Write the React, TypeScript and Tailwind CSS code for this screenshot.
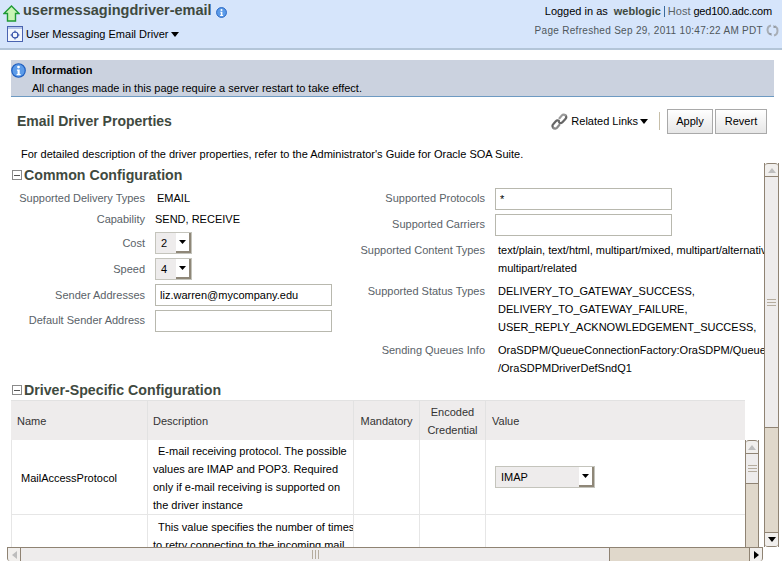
import type { ReactNode } from 'react';

const FONT = "font-['Liberation_Sans',Arial,sans-serif]";

function Caret(): JSX.Element {
    return (
        <svg width="8" height="5" viewBox="0 0 8 5" className="shrink-0">
            <path d="M0 0h8L4 5z" fill="#000" />
        </svg>
    );
}

function UpArrowIcon(): JSX.Element {
    return (
        <svg width="17" height="17" viewBox="0 0 17 17" className="shrink-0 mt-[4px]">
            <path d="M8.500 1 16 8.500h-3.500V16h-8V8.500H1z" fill="#c9f5b4" stroke="#1f9a35" strokeWidth="1.400" />
        </svg>
    );
}

function InfoIcon(props: { size: number }): JSX.Element {
    return (
        <svg width={props.size} height={props.size} viewBox="0 0 16 16" className="shrink-0">
            <circle cx="8" cy="8" r="7.200" fill="#5c9be8" stroke="#1f5fc0" strokeWidth="1.300" />
            <circle cx="8" cy="4.300" r="1.500" fill="#fff" />
            <path d="M6.300 6.800h3v4.800h1v1.400H6v-1.400h1V8.200h-.7z" fill="#fff" />
        </svg>
    );
}

function TargetIcon(): JSX.Element {
    return (
        <svg width="16" height="16" viewBox="0 0 16 16" className="shrink-0 mb-[1px]">
            <rect x="0.500" y="0.500" width="15" height="15" fill="#f2f6fd" stroke="#4a63b0" />
            <path d="M1 1h14v2H1z" fill="#b5c6ea" />
            <circle cx="8" cy="9" r="3" fill="none" stroke="#3550a8" strokeWidth="1.200" />
            <path d="M8 4.500v2.500M8 11v2.500M3.500 9H6M10 9h2.500" stroke="#3550a8" />
        </svg>
    );
}

function RefreshIcon(): JSX.Element {
    return (
        <svg width="13" height="13" viewBox="0 0 13 13" className="shrink-0">
            <path d="M5 1.500C2.500 2 1.500 4 1.500 6c0 2 1 3.500 2.500 4.500M8 11.500c2.500-.5 3.500-2.500 3.500-5 0-2-1-3.500-2.500-4.500" fill="none" stroke="#a8aeb6" strokeWidth="2" />
            <path d="M2.500 9.500 5.500 9v3zM10.500 3.500 7.500 4V1z" fill="#8d949c" />
        </svg>
    );
}

function LinkIcon(): JSX.Element {
    return (
        <svg width="17" height="17" viewBox="0 0 17 17" className="shrink-0">
            <g fill="none" strokeLinecap="round">
                <path d="M2.500 15c-1.500-1-1.300-2.800-.3-3.800l2.600-3c1-1 2.400-1 3.200-.2" stroke="#666" strokeWidth="2.200" />
                <path d="M2.500 15c1 1 2.600.7 3.500-.3l2.300-2.700" stroke="#8a8a8a" strokeWidth="2.200" />
                <path d="M8.200 9.500c1 1 2.300.8 3.200-.2l3-3.400c1-1 .9-2.600 0-3.600" stroke="#666" strokeWidth="2.200" />
                <path d="M14.400 2.300c-1-1-2.600-.9-3.500.1L8.500 5.200" stroke="#9a9a9a" strokeWidth="2.200" />
            </g>
        </svg>
    );
}

function MinusBox(): JSX.Element {
    return (
        <div className="w-[10px] h-[10px] border border-[#8a8a8a] flex items-center justify-center shrink-0 mr-[1px]">
            <div className="w-[6px] h-px bg-[#555]" />
        </div>
    );
}

function SectionTitle(props: { title: string }): JSX.Element {
    return (
        <div className="flex items-center gap-[1px] h-[20px] pl-[12px]">
            <MinusBox />
            <h2 className="text-[14.200px] font-bold text-[#3f4a3f] leading-none">{props.title}</h2>
        </div>
    );
}

function FormRow(props: { label: string; height: string; labelClass?: string; children: ReactNode }): JSX.Element {
    return (
        <div className={`flex items-center ${props.height}`}>
            <div className={`w-[145px] text-right text-[#5a6268] shrink-0 ${props.labelClass ?? ''}`}>{props.label}</div>
            <div className="ml-[10px] text-black whitespace-nowrap">{props.children}</div>
        </div>
    );
}

function TextRow(props: { label: string; top: string; height: string; children: ReactNode }): JSX.Element {
    return (
        <div className={`flex items-start box-content leading-[18px] ${props.top} ${props.height}`}>
            <div className="w-[145px] text-right text-[#5a6268] shrink-0">{props.label}</div>
            <div className="ml-[13px] whitespace-nowrap">{props.children}</div>
        </div>
    );
}

function TextBox(props: { value?: string }): JSX.Element {
    return (
        <div className="w-[177px] h-[22px] border border-[#b8b8ae] bg-white flex items-center pl-[4px] text-black">
            {props.value}
        </div>
    );
}

function Select(props: { value: string; width: string; pad: string }): JSX.Element {
    return (
        <div className={`${props.width} ${props.pad} h-[22px] border border-[#c4c4bc] bg-[#eeecec] flex items-center justify-between`}>
            <span className="pt-[1px]">{props.value}</span>
            <div className="w-[15px] h-[20px] bg-white border-r-2 border-b-2 border-[#8f8778] flex items-center justify-center">
                <svg width="7" height="4" viewBox="0 0 7 4">
                    <path d="M0 0h7L3.500 4z" fill="#000" />
                </svg>
            </div>
        </div>
    );
}

function ScrollBtn(props: { dir: 'up' | 'down' | 'left' | 'right'; className: string; muted?: boolean }): JSX.Element {
    const paths = {
        up: 'M0 5 4 0l4 5z',
        down: 'M0 0h8L4 5z',
        left: 'M5 0v8L0 4z',
        right: 'M0 0v8l5-4z',
    };
    const vertical = props.dir === 'up' || props.dir === 'down';
    return (
        <div className={`flex items-center justify-center shrink-0 bg-[#f1efed] border-[#8f8373] ${props.className}`}>
            <svg width={vertical ? 8 : 5} height={vertical ? 5 : 8} viewBox={vertical ? '0 0 8 5' : '0 0 5 8'}>
                <path d={paths[props.dir]} fill={props.muted ? '#bdbdbd' : '#000'} />
            </svg>
        </div>
    );
}

function Grip(props: { vertical: boolean }): JSX.Element {
    return (
        <div className={`flex ${props.vertical ? 'flex-col gap-[2px]' : 'flex-row gap-[2px]'}`}>
            {[0, 1, 2].map((i) => (
                <div key={i} className={props.vertical ? 'w-[9px] h-px bg-[#b5ac9e]' : 'w-px h-[9px] bg-[#b5ac9e]'} />
            ))}
        </div>
    );
}

const HEADER_CELL = 'border-r border-[#e2e2e2] flex items-center shrink-0';
const BODY_CELL = 'border-r border-b border-[#e6e6e6] shrink-0';

export default function App(): JSX.Element {
    return (
        <div className={`${FONT} w-[782px] h-[561px] overflow-hidden bg-white text-[11px] text-black flex flex-col`}>
            <header className="h-[50px] shrink-0 bg-[#d6e5fb] border-b-2 border-[#b3c5d8] flex justify-between">
                <div className="pl-[3px] pt-[1px]">
                    <div className="flex items-center h-[20px]">
                        <UpArrowIcon />
                        <span className="ml-[3px] text-[14.500px] font-bold text-[#3f4a3f]">usermessagingdriver-email</span>
                        <span className="ml-[4px] mt-[3px]"><InfoIcon size={11} /></span>
                    </div>
                    <div className="flex items-center h-[18px] mt-[4px] pl-[4px]">
                        <TargetIcon />
                        <span className="ml-[3px]">User Messaging Email Driver</span>
                        <span className="ml-[3px]"><Caret /></span>
                    </div>
                </div>
                <div className="pr-[3px] pt-[4px] flex flex-col items-end">
                    <div className="flex items-center h-[14px] pr-[7px]">
                        <span>Logged in as</span>
                        <span className="ml-[6px] font-bold text-[#3f4a3f]">weblogic</span>
                        <span className="ml-[3px] w-px h-[11px] bg-[#3b6b9c]" />
                        <span className="ml-[3px] text-[#5a6268]">Host</span>
                        <span className="ml-[3px] tracking-[-0.2px]">ged100.adc.com</span>
                    </div>
                    <div className="flex items-center h-[14px] mt-[5px] text-[10px] text-[#4f575c] tracking-[0.3px]">
                        <span>Page Refreshed Sep 29, 2011 10:47:22 AM PDT</span>
                        <span className="ml-[3px]"><RefreshIcon /></span>
                    </div>
                </div>
            </header>

            <div className="mt-[10px] mx-[11px] w-[763px] h-[37px] shrink-0 bg-[#cbd2df] border-b border-[#6d9ac2] pt-[2px]">
                <div className="flex items-center h-[17px]">
                    <InfoIcon size={15} />
                    <span className="ml-[6px] font-bold">Information</span>
                </div>
                <div className="pl-[21px] leading-[18px]">All changes made in this page require a server restart to take effect.</div>
            </div>

            <div className="h-[48px] shrink-0 flex items-center justify-between pl-[17px] pr-[15px]">
                <h1 className="text-[14px] font-bold text-[#3f4a3f] pt-[1px]">Email Driver Properties</h1>
                <div className="flex items-center">
                    <LinkIcon />
                    <span className="ml-[3px]">Related Links</span>
                    <span className="ml-[2px]"><Caret /></span>
                    <div className="ml-[11px] w-px h-[18px] bg-[#c7bfa9]" />
                    <button className="ml-[7px] w-[46px] h-[25px] border border-[#a9a9a9] bg-gradient-to-b from-white to-[#e6e6e6] text-black">Apply</button>
                    <button className="ml-[2px] w-[52px] h-[25px] border border-[#a9a9a9] bg-gradient-to-b from-white to-[#e6e6e6] text-black">Revert</button>
                </div>
            </div>

            <p className="pl-[21px] h-[18px] pt-[1px] shrink-0 leading-[16px]">
                For detailed description of the driver properties, refer to the Administrator's Guide for Oracle SOA Suite.
            </p>

            <div className="flex h-[384px] shrink-0">
                <div className="w-[764px] shrink-0 overflow-hidden">
                    <div className="h-[2px]" />
                    <SectionTitle title="Common Configuration" />
                    <div className="flex h-[195px]">
                        <div className="w-[340px] shrink-0 flex flex-col pt-[3px]">
                            <FormRow label="Supported Delivery Types" height="h-[20px]"><span className="pl-[2px]">EMAIL</span></FormRow>
                            <FormRow label="Capability" height="h-[22px]">SEND, RECEIVE</FormRow>
                            <FormRow label="Cost" height="h-[26px]"><Select value="2" width="w-[37px]" pad="pl-[5px]" /></FormRow>
                            <FormRow label="Speed" height="h-[26px]"><Select value="4" width="w-[37px]" pad="pl-[5px]" /></FormRow>
                            <FormRow label="Sender Addresses" height="h-[26px]"><TextBox value="liz.warren@mycompany.edu" /></FormRow>
                            <FormRow label="Default Sender Address" height="h-[26px]" labelClass="pb-[2px]"><TextBox /></FormRow>
                        </div>
                        <div className="flex-1 min-w-0 flex flex-col pt-[1px]">
                            <FormRow label="Supported Protocols" height="h-[26px]" labelClass="pb-[2px]"><TextBox value="*" /></FormRow>
                            <FormRow label="Supported Carriers" height="h-[26px]" labelClass="pb-[2px]"><TextBox /></FormRow>
                            <TextRow label="Supported Content Types" top="pt-[3px]" height="h-[36px]">text/plain, text/html, multipart/mixed, multipart/alternative,<br />multipart/related</TextRow>
                            <TextRow label="Supported Status Types" top="pt-[5px]" height="h-[54px]">DELIVERY_TO_GATEWAY_SUCCESS,<br />DELIVERY_TO_GATEWAY_FAILURE,<br />USER_REPLY_ACKNOWLEDGEMENT_SUCCESS,</TextRow>
                            <TextRow label="Sending Queues Info" top="pt-[5px]" height="h-[36px]">OraSDPM/QueueConnectionFactory:OraSDPM/Queues<br />/OraSDPMDriverDefSndQ1</TextRow>
                        </div>
                    </div>
                    <SectionTitle title="Driver-Specific Configuration" />
                    <div className="ml-[11px] flex">
                        <div className="w-[734px] shrink-0">
                            <div className="flex h-[40px] bg-[#eeecec] border-t border-[#e2e2e2] text-[#333]">
                                <div className={`${HEADER_CELL} w-[137px] pl-[6px] pt-[2px]`}>Name</div>
                                <div className={`${HEADER_CELL} w-[206px] pl-[5px] pt-[2px]`}>Description</div>
                                <div className={`${HEADER_CELL} w-[66px] justify-center pt-[2px]`}>Mandatory</div>
                                <div className={`${HEADER_CELL} w-[66px] justify-center text-center leading-[18px]`}>Encoded<br />Credential</div>
                                <div className="flex items-center pl-[6px] pt-[2px]">Value</div>
                            </div>
                            <div className="flex h-[75px]">
                                <div className={`${BODY_CELL} w-[137px] pl-[9px] pt-[2px] flex items-center border-l`}>MailAccessProtocol</div>
                                <div className={`${BODY_CELL} w-[206px] pl-[5px] leading-[18px] pt-[2px] whitespace-nowrap overflow-hidden`}>
                                    <span className="pl-[5px]">E-mail receiving protocol. The possible</span><br />values are IMAP and POP3. Required<br />only if e-mail receiving is supported on<br />the driver instance
                                </div>
                                <div className={`${BODY_CELL} w-[66px]`} />
                                <div className={`${BODY_CELL} w-[66px]`} />
                                <div className="flex-1 border-b border-[#e6e6e6] flex items-center pl-[9px]">
                                    <Select value="IMAP" width="w-[100px]" pad="pl-[5px]" />
                                </div>
                            </div>
                            <div className="flex h-[33px]">
                                <div className={`${BODY_CELL} w-[137px] border-l`} />
                                <div className={`${BODY_CELL} w-[206px] pl-[5px] leading-[18px] pt-[3px] whitespace-nowrap overflow-hidden`}>
                                    <span className="pl-[5px]">This value specifies the number of times</span><br />to retry connecting to the incoming mail
                                </div>
                                <div className={`${BODY_CELL} w-[66px]`} />
                                <div className={`${BODY_CELL} w-[66px]`} />
                            </div>
                        </div>
                        <div className="w-[14px] shrink-0 pt-[40px] h-[147px]">
                            <div className="h-full flex flex-col border-x border-[#8f8373]">
                                <ScrollBtn dir="up" muted className="h-[14px] border-t border-b rounded-t-[3px]" />
                                <div className="h-[30px] shrink-0 bg-[#eeecec] border-b border-[#8f8373] flex items-center justify-center">
                                    <Grip vertical />
                                </div>
                                <div className="flex-1 bg-[#e0d8cb]" />
                            </div>
                        </div>
                    </div>
                </div>
                <div className="w-[15px] shrink-0 flex flex-col border-x border-[#8f8373]">
                    <ScrollBtn dir="up" muted className="h-[14px] border-t border-b rounded-t-[3px]" />
                    <div className="h-[251px] shrink-0 bg-[#eeecec] border-b border-[#8f8373] flex items-end justify-center pb-[121px]">
                        <Grip vertical />
                    </div>
                    <div className="flex-1 bg-[#e0d8cb]" />
                    <ScrollBtn dir="down" className="h-[15px] border-t border-b rounded-b-[3px]" />
                </div>
            </div>

            <div className="h-[14px] shrink-0 ml-[7px] w-[756px] flex border-t border-[#8f8373]">
                <ScrollBtn dir="left" muted className="w-[14px] border-l border-r rounded-bl-[3px]" />
                <div className="w-[589px] shrink-0 bg-[#eeecec] border-r border-[#8f8373] flex items-center justify-center">
                    <Grip vertical={false} />
                </div>
                <div className="flex-1 bg-[#e0d8cb]" />
                <ScrollBtn dir="right" className="w-[14px] border-l border-r rounded-br-[3px]" />
            </div>
        </div>
    );
}
